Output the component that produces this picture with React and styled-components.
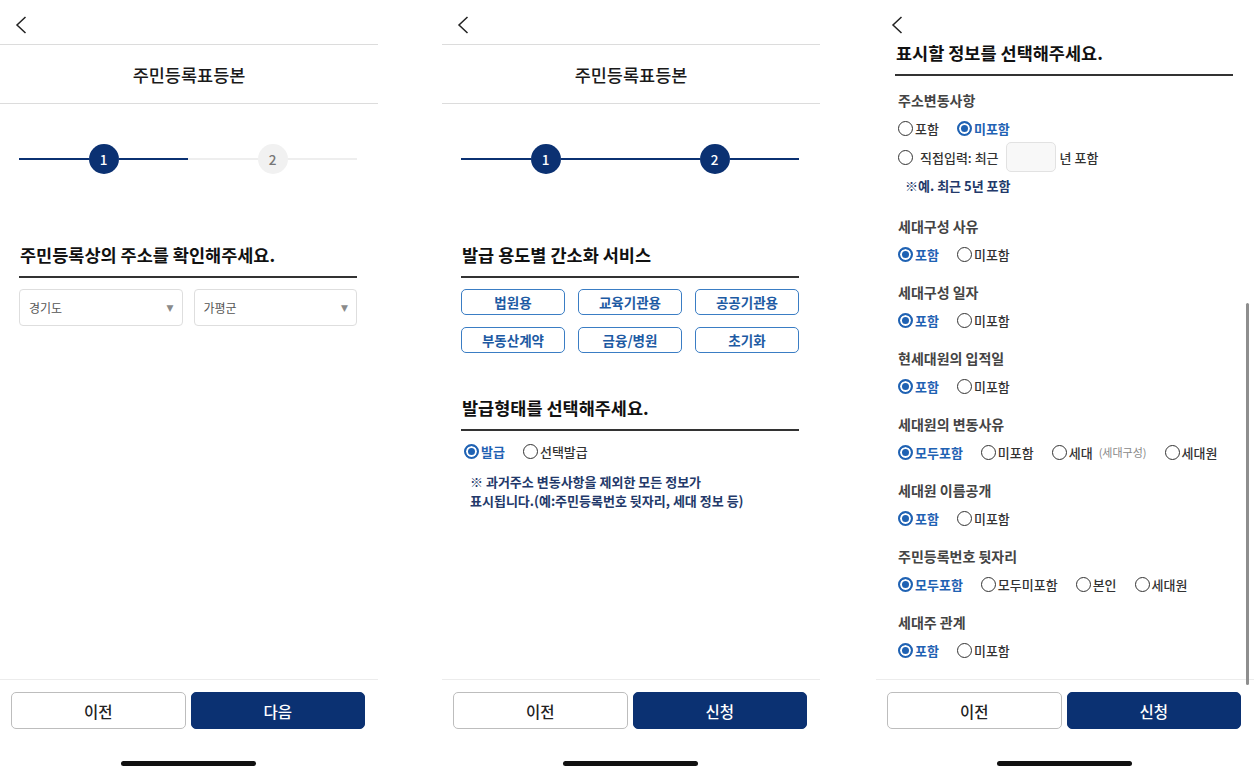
import React from 'react';
import styled, { createGlobalStyle } from 'styled-components';

const NAVY = '#0b3172';
const BLUE = '#1f62b3';

const GlobalStyle = createGlobalStyle`
  * { box-sizing: border-box; }
  body {
    margin: 0;
    background: #fff;
    font-family: "Noto Sans CJK KR", "Noto Sans", sans-serif;
    color: #222;
  }
`;

const Screen = styled.div`
  display: flex;
  width: 1255px;
  height: 776px;
  overflow: hidden;
  background: #fff;
`;

const Panel = styled.div`
  position: relative;
  flex: none;
  width: 378px;
  height: 776px;
  margin-left: ${(p) => p.$offset}px;
  display: flex;
  flex-direction: column;
`;

const TopBar = styled.div`
  flex: none;
  height: ${(p) => (p.$bordered ? 45 : 40)}px;
  padding: 15px 0 0 15px;
  border-bottom: ${(p) => (p.$bordered ? '1px solid #dcdcdc' : 'none')};
`;

const TitleBar = styled.div`
  flex: none;
  height: 59px;
  display: flex;
  align-items: center;
  justify-content: center;
  font-size: 17.5px;
  font-weight: 500;
  color: #1a1a1a;
  border-bottom: 1px solid #dcdcdc;
`;

const Body = styled.div`
  flex: 1;
  min-height: 0;
  overflow: hidden;
  padding: 0 21px 0 19px;
  display: flex;
  flex-direction: column;
`;

const Stepper = styled.div`
  margin-top: 40px;
  height: 30px;
  display: grid;
  grid-template-columns: 1fr 1fr;
`;

const StepCell = styled.div`
  display: flex;
  align-items: center;
`;

const StepLine = styled.div`
  flex: 1;
  height: 2px;
  background: ${(p) => (p.$active ? NAVY : '#eeeeee')};
`;

const StepDot = styled.div`
  width: 30px;
  height: 30px;
  border-radius: 50%;
  display: flex;
  align-items: center;
  justify-content: center;
  font-size: 13.5px;
  font-weight: 500;
  background: ${(p) => (p.$active ? NAVY : '#f1f1f1')};
  color: ${(p) => (p.$active ? '#fff' : '#777')};
`;

const Heading = styled.h2`
  margin: ${(p) => p.$top}px 0 0;
  padding: 0 0 8px 1px;
  font-size: 17.5px;
  line-height: 26px;
  font-weight: 700;
  color: #111;
  border-bottom: 2px solid #333;
`;

const SelectRow = styled.div`
  margin-top: 11px;
  display: grid;
  grid-template-columns: 1fr 1fr;
  gap: 11px;
`;

const Select = styled.div`
  height: 37px;
  border: 1px solid #dedede;
  border-radius: 4px;
  padding: 0 8px 0 9px;
  display: flex;
  align-items: center;
  justify-content: space-between;
  font-size: 12px;
  color: #555;
`;

const Caret = styled.span`
  font-family: "DejaVu Sans", sans-serif;
  font-size: 9px;
  color: #8a8a8a;
`;

const PurposeGrid = styled.div`
  margin-top: 11px;
  display: grid;
  grid-template-columns: repeat(3, 1fr);
  gap: 12px 13px;
`;

const PurposeButton = styled.button`
  height: 26px;
  padding: 0;
  border: 1.5px solid #3a7dc4;
  border-radius: 5px;
  background: #fff;
  color: #1d5aa3;
  font-family: inherit;
  font-size: 13.5px;
  font-weight: 700;
`;

const RadioRow = styled.div`
  margin-top: ${(p) => p.$top}px;
  padding-left: 3px;
  height: ${(p) => p.$height ?? 20}px;
  display: flex;
  align-items: center;
  gap: ${(p) => p.$gap ?? 18}px;
`;

const Option = styled.label`
  display: flex;
  align-items: center;
  gap: 2px;
  font-size: 13px;
  font-weight: ${(p) => (p.$checked ? 700 : 500)};
  color: ${(p) => (p.$checked ? BLUE : '#333')};
  white-space: nowrap;
`;

const Dot = styled.span`
  flex: none;
  width: 15px;
  height: 15px;
  border-radius: 50%;
  border: ${(p) => (p.$checked ? `2px solid ${BLUE}` : '1.5px solid #333')};
  background: ${(p) => (p.$checked ? BLUE : '#fff')};
  box-shadow: ${(p) => (p.$checked ? 'inset 0 0 0 2px #fff' : 'none')};
`;

const Hint = styled.span`
  margin-left: 4px;
  font-size: 11px;
  font-weight: 400;
  color: #888;
`;

const Note = styled.p`
  margin: ${(p) => p.$top}px 0 0;
  padding-left: ${(p) => p.$indent}px;
  font-size: 13px;
  line-height: 19px;
  font-weight: 700;
  color: #23396a;
`;

const DirectText = styled.span`
  margin-left: ${(p) => p.$left ?? 7}px;
  font-size: 13px;
  font-weight: 500;
  color: #333;
`;

const YearBox = styled.div`
  width: 50px;
  height: 30px;
  margin: 0 4px 0 7px;
  border: 1px solid #e2e2e2;
  border-radius: 5px;
  background: #f8f8f8;
`;

const Section = styled.div`
  margin-top: ${(p) => p.$top}px;
`;

const SectionLabel = styled.div`
  padding-left: 3px;
  font-size: 14px;
  line-height: 20px;
  font-weight: 700;
  color: #444;
`;

const Footer = styled.div`
  flex: none;
  border-top: 1px solid #ececec;
  padding: 12px 13px 0 11px;
`;

const ButtonRow = styled.div`
  display: grid;
  grid-template-columns: 1fr 1fr;
  gap: 5px;
`;

const FooterButton = styled.button`
  height: 37px;
  border-radius: 5px;
  font-family: inherit;
  font-size: 15.5px;
  font-weight: 500;
  border: 1px solid ${(p) => (p.$primary ? NAVY : '#bdbdbd')};
  background: ${(p) => (p.$primary ? NAVY : '#fff')};
  color: ${(p) => (p.$primary ? '#fff' : '#222')};
`;

const HomeBar = styled.div`
  width: 135px;
  height: 5px;
  margin: 32px auto 10px;
  border-radius: 3px;
  background: #111;
`;

const ScrollThumb = styled.div`
  position: absolute;
  right: 5px;
  top: 303px;
  width: 3px;
  height: 382px;
  border-radius: 2px;
  background: #8e8e8e;
`;

const BackIcon = () => (
  <svg width="12" height="18" viewBox="0 0 12 18">
    <polyline points="10.5,1 2,9 10.5,17" fill="none" stroke="#222" strokeWidth="1.5" />
  </svg>
);

const Radio = ({ checked, children, hint }) => (
  <Option $checked={checked}>
    <Dot $checked={checked} />
    {children}
    {hint && <Hint>{hint}</Hint>}
  </Option>
);

const Steps = ({ current }) => (
  <Stepper>
    <StepCell>
      <StepLine $active />
      <StepDot $active>1</StepDot>
      <StepLine $active />
    </StepCell>
    <StepCell>
      <StepLine $active={current >= 2} />
      <StepDot $active={current >= 2}>2</StepDot>
      <StepLine $active={current >= 2} />
    </StepCell>
  </Stepper>
);

const Bottom = ({ next }) => (
  <Footer>
    <ButtonRow>
      <FooterButton>이전</FooterButton>
      <FooterButton $primary>{next}</FooterButton>
    </ButtonRow>
    <HomeBar />
  </Footer>
);

const purposes = ['법원용', '교육기관용', '공공기관용', '부동산계약', '금융/병원', '초기화'];

const sections = [
  { label: '세대구성 사유', options: [{ text: '포함', checked: true }, { text: '미포함' }] },
  { label: '세대구성 일자', options: [{ text: '포함', checked: true }, { text: '미포함' }] },
  { label: '현세대원의 입적일', options: [{ text: '포함', checked: true }, { text: '미포함' }] },
  {
    label: '세대원의 변동사유',
    options: [
      { text: '모두포함', checked: true },
      { text: '미포함' },
      { text: '세대', hint: '(세대구성)' },
      { text: '세대원' },
    ],
  },
  { label: '세대원 이름공개', options: [{ text: '포함', checked: true }, { text: '미포함' }] },
  {
    label: '주민등록번호 뒷자리',
    options: [
      { text: '모두포함', checked: true },
      { text: '모두미포함' },
      { text: '본인' },
      { text: '세대원' },
    ],
  },
  { label: '세대주 관계', options: [{ text: '포함', checked: true }, { text: '미포함' }] },
];

const AddressStep = () => (
  <Panel $offset={0}>
    <TopBar $bordered>
      <BackIcon />
    </TopBar>
    <TitleBar>주민등록표등본</TitleBar>
    <Body>
      <Steps current={1} />
      <Heading $top={68}>주민등록상의 주소를 확인해주세요.</Heading>
      <SelectRow>
        <Select>
          경기도<Caret>▼</Caret>
        </Select>
        <Select>
          가평군<Caret>▼</Caret>
        </Select>
      </SelectRow>
    </Body>
    <Bottom next="다음" />
  </Panel>
);

const IssueStep = () => (
  <Panel $offset={64}>
    <TopBar $bordered>
      <BackIcon />
    </TopBar>
    <TitleBar>주민등록표등본</TitleBar>
    <Body>
      <Steps current={2} />
      <Heading $top={68}>발급 용도별 간소화 서비스</Heading>
      <PurposeGrid>
        {purposes.map((p) => (
          <PurposeButton key={p}>{p}</PurposeButton>
        ))}
      </PurposeGrid>
      <Heading $top={42}>발급형태를 선택해주세요.</Heading>
      <RadioRow $top={10}>
        <Radio checked>발급</Radio>
        <Radio>선택발급</Radio>
      </RadioRow>
      <Note $top={11} $indent={9}>
        ※ 과거주소 변동사항을 제외한 모든 정보가
        <br />
        표시됩니다.(예:주민등록번호 뒷자리, 세대 정보 등)
      </Note>
    </Body>
    <Bottom next="신청" />
  </Panel>
);

const DetailStep = () => (
  <Panel $offset={56}>
    <TopBar>
      <BackIcon />
    </TopBar>
    <Body>
      <Heading $top={0}>표시할 정보를 선택해주세요.</Heading>
      <Section $top={14}>
        <SectionLabel>주소변동사항</SectionLabel>
        <RadioRow $top={8}>
          <Radio>포함</Radio>
          <Radio checked>미포함</Radio>
        </RadioRow>
        <RadioRow $top={4} $height={30} $gap={0}>
          <Dot />
          <DirectText>직접입력: 최근</DirectText>
          <YearBox />
          <DirectText $left={0}>년 포함</DirectText>
        </RadioRow>
        <Note $top={4} $indent={10}>※예. 최근 5년 포함</Note>
      </Section>
      {sections.map((s, i) => (
        <Section key={s.label} $top={i === 0 ? 21 : 18}>
          <SectionLabel>{s.label}</SectionLabel>
          <RadioRow $top={8}>
            {s.options.map((o) => (
              <Radio key={o.text} checked={o.checked} hint={o.hint}>
                {o.text}
              </Radio>
            ))}
          </RadioRow>
        </Section>
      ))}
    </Body>
    <Bottom next="신청" />
    <ScrollThumb />
  </Panel>
);

const App = () => (
  <>
    <GlobalStyle />
    <Screen>
      <AddressStep />
      <IssueStep />
      <DetailStep />
    </Screen>
  </>
);

export default App;
